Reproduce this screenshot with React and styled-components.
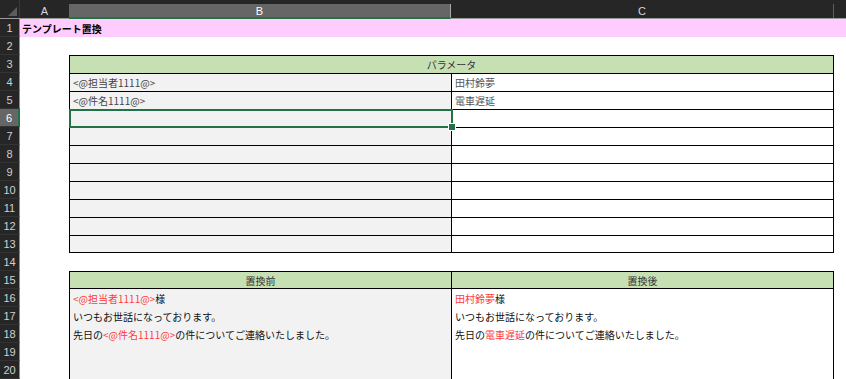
import React from 'react';
import styled, { createGlobalStyle, css } from 'styled-components';

const GlobalStyle = createGlobalStyle`
  html, body {
    margin: 0;
    padding: 0;
    background: #ffffff;
  }
  body {
    font-family: "Noto Sans CJK JP", "Noto Sans", sans-serif;
    overflow: hidden;
  }
`;

const COLS = '20px 49px 382px 383px 1fr';

const Sheet = styled.div`
  width: 846px;
  height: 379px;
  overflow: hidden;
  background: #ffffff;
`;

const HeaderBar = styled.div`
  display: grid;
  grid-template-columns: ${COLS};
  height: 19px;
  background: #262626;
  border-bottom: 1px solid #9a9a9a;
  box-sizing: border-box;
`;

const Corner = styled.div`
  display: flex;
  align-items: flex-end;
  justify-content: flex-end;
  padding: 0 2px 2px 0;
  border-right: 1px solid #3a3a3a;
`;

const ColHead = styled.div`
  display: flex;
  align-items: center;
  justify-content: center;
  color: #d6d6d6;
  font-family: "Liberation Sans", Arial, sans-serif;
  font-size: 11px;
  padding-top: 3px;
  box-sizing: border-box;
  ${(p) => p.$divider && css`
    border-right: 1px solid #5e5e5e;
    margin-top: 4px;
    padding-top: 0;
  `}
  ${(p) => p.$active && css`
    background: #666666;
    color: #ffffff;
    margin-top: 4px;
    margin-bottom: -1px;
    padding-top: 0;
    border-bottom: 2px solid #217346;
    border-right: 1px solid #a8a8a8;
  `}
`;

const Row = styled.div`
  display: grid;
  grid-template-columns: ${COLS};
  height: 18px;
`;

const RowHead = styled.div`
  display: flex;
  align-items: center;
  justify-content: center;
  box-sizing: border-box;
  background: #262626;
  color: #d0d0d0;
  font-family: "Liberation Sans", Arial, sans-serif;
  font-size: 11px;
  border-bottom: 1px solid #333333;
  border-right: 1px solid #8e8e8e;
  ${(p) => p.$active && css`
    background: #666666;
    color: #ffffff;
    border-right: 2px solid #217346;
  `}
`;

const Cell = styled.div`
  position: relative;
  display: flex;
  align-items: center;
  justify-content: ${(p) => (p.$center ? 'center' : 'flex-start')};
  box-sizing: border-box;
  padding: 0 3px;
  min-width: 0;
  white-space: nowrap;
  font-size: 10px;
  color: ${(p) => p.$color || '#222222'};
  background: ${(p) => p.$bg || 'transparent'};
  border-top: ${(p) => (p.$top ? '1px solid #000' : 'none')};
  border-bottom: ${(p) => (p.$bottom ? '1px solid #000' : 'none')};
  border-left: ${(p) => (p.$left ? '1px solid #000' : 'none')};
  border-right: ${(p) => (p.$right ? '1px solid #000' : 'none')};
  grid-column: ${(p) => p.$span || 'auto'};
`;

const Title = styled(Cell)`
  background: #ffccff;
  font-weight: bold;
  color: #000000;
  padding-left: 2px;
`;

const Red = styled.span`
  color: #ff3b3b;
`;

const Selection = styled.div`
  position: absolute;
  z-index: 2;
  left: -1px;
  top: -1px;
  right: -2px;
  bottom: -1px;
  border: 2px solid #217346;
  pointer-events: none;
`;

const Handle = styled.div`
  position: absolute;
  right: -5px;
  bottom: -5px;
  width: 6px;
  height: 6px;
  background: #217346;
  border: 1px solid #ffffff;
`;

const GREY = '#f2f2f2';
const GREEN = '#c6e0b4';

const TriangleIcon = () => (
  <svg width="9" height="9" viewBox="0 0 9 9">
    <polygon points="9,0 9,9 0,9" fill="#5c5c5c" />
  </svg>
);

const ParamRow = ({ n, b, c, last, active }) => (
  <Row>
    <RowHead $active={active}>{n}</RowHead>
    <Cell />
    <Cell $bg={GREY} $left $top $bottom={last} $color="#444">
      {b}
      {active && (
        <Selection>
          <Handle />
        </Selection>
      )}
    </Cell>
    <Cell $left $right $top $bottom={last} $color="#555">{c}</Cell>
    <Cell />
  </Row>
);

const BodyRow = ({ n, b, c }) => (
  <Row>
    <RowHead>{n}</RowHead>
    <Cell />
    <Cell $bg={GREY} $left $color="#111">{b}</Cell>
    <Cell $left $right $color="#111">{c}</Cell>
    <Cell />
  </Row>
);

const EmptyRow = ({ n }) => (
  <Row>
    <RowHead>{n}</RowHead>
  </Row>
);

const params = [
  { b: '<@担当者1111@>', c: '田村鈴夢' },
  { b: '<@件名1111@>', c: '電車遅延' },
  {}, {}, {}, {}, {}, {}, {}, {},
];

const body = [
  {
    b: <><Red>{'<@担当者1111@>'}</Red>様</>,
    c: <><Red>田村鈴夢</Red>様</>,
  },
  { b: 'いつもお世話になっております。', c: 'いつもお世話になっております。' },
  {
    b: <>先日の<Red>{'<@件名1111@>'}</Red>の件についてご連絡いたしました。</>,
    c: <>先日の<Red>電車遅延</Red>の件についてご連絡いたしました。</>,
  },
  {}, {},
];

const App = () => (
  <>
    <GlobalStyle />
    <Sheet>
      <HeaderBar>
        <Corner><TriangleIcon /></Corner>
        <ColHead>A</ColHead>
        <ColHead $active>B</ColHead>
        <ColHead $divider>C</ColHead>
        <ColHead />
      </HeaderBar>

      <Row>
        <RowHead>1</RowHead>
        <Title $span="2 / -1">テンプレート置換</Title>
      </Row>
      <EmptyRow n={2} />

      <Row>
        <RowHead>3</RowHead>
        <Cell />
        <Cell $span="3 / 5" $bg={GREEN} $left $right $top $center $color="#333">
          パラメータ
        </Cell>
        <Cell />
      </Row>
      {params.map((p, i) => (
        <ParamRow
          key={i}
          n={i + 4}
          b={p.b}
          c={p.c}
          active={i + 4 === 6}
          last={i === params.length - 1}
        />
      ))}

      <EmptyRow n={14} />

      <Row>
        <RowHead>15</RowHead>
        <Cell />
        <Cell $bg={GREEN} $left $top $bottom $center $color="#333">置換前</Cell>
        <Cell $bg={GREEN} $left $right $top $bottom $center $color="#333">置換後</Cell>
        <Cell />
      </Row>
      {body.map((r, i) => (
        <BodyRow key={i} n={i + 16} b={r.b} c={r.c} />
      ))}
    </Sheet>
  </>
);

export default App;
